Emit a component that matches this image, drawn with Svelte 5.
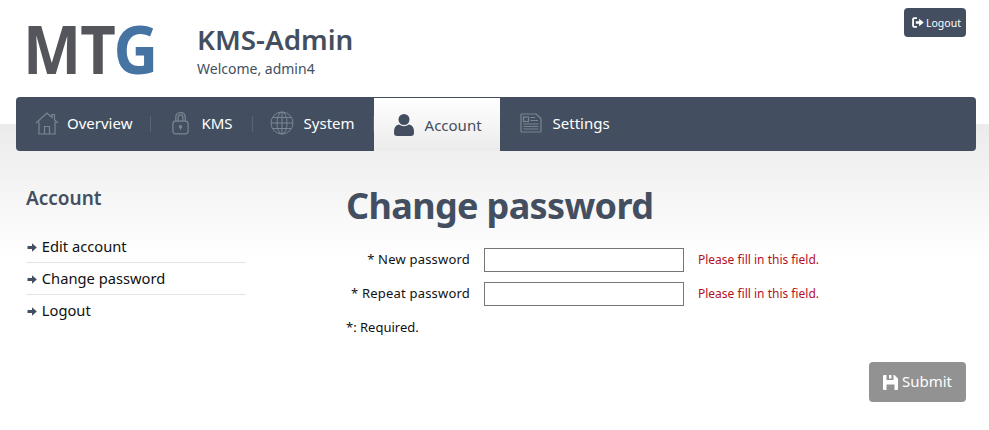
<script lang="ts">
const tabs = [
	{ id: "overview", label: "Overview" },
	{ id: "kms", label: "KMS" },
	{ id: "system", label: "System" },
	{ id: "account", label: "Account" },
	{ id: "settings", label: "Settings" }
];
const sideLinks = ["Edit account", "Change password", "Logout"];
const fields = ["New password", "Repeat password"];
</script>

<div class="page">
	<header class="top">
		<div class="logo"><span class="logo-text">MT<span class="logo-g">G</span></span></div>
		<div class="brand">
			<h1>KMS-Admin</h1>
			<p>Welcome, admin4</p>
		</div>
		<button class="logout">
			<svg width="12" height="11" viewBox="0 0 11 10"><path d="M4.5 1H2Q1 1 1 2V8Q1 9 2 9H4.5" fill="none" stroke="#fff" stroke-width="1.7"/><path d="M3.5 3.8H6.5V1.5L10.8 5L6.5 8.5V6.2H3.5Z" fill="#fff"/></svg>
			Logout
		</button>
	</header>

	<nav class="tabs">
		{#each tabs as tab, i}
			<div class="tab tab-{tab.id}" class:active={tab.id === "account"}>
				{#if tab.id === "overview"}
					<svg width="24" height="24" viewBox="0 0 24 24" fill="none" stroke="#7c8591" stroke-width="1.2"><path d="M1 12L12 2L17 6.5V3.5H19.5V9L23 12"/><path d="M4 10.5V23H20V10.5"/><path d="M9.5 23V15.5H14.5V23"/></svg>
				{:else if tab.id === "kms"}
					<svg width="19" height="24" viewBox="0 0 20 24" fill="none" stroke="#7c8591" stroke-width="1.3"><path d="M5 10V6.5Q5 1 10 1T15 6.5V10"/><path d="M7.5 10V6.5Q7.5 3.5 10 3.5T12.5 6.5V10"/><rect x="2" y="10" width="16" height="13.5" rx="3"/><circle cx="10" cy="16" r="1.2" fill="#7c8591"/><path d="M10 16V19"/></svg>
				{:else if tab.id === "system"}
					<svg width="24" height="24" viewBox="0 0 24 24" fill="none" stroke="#7c8591" stroke-width="1"><circle cx="12" cy="12" r="11"/><ellipse cx="12" cy="12" rx="5" ry="11"/><path d="M12 1V23M1 12H23M2.5 6.5H21.5M2.5 17.5H21.5"/></svg>
				{:else if tab.id === "account"}
					<svg width="20" height="22" viewBox="0 0 20 22" fill="#434f60"><circle cx="10" cy="5.5" r="5.5"/><path d="M0 18Q0 11 5 10.5Q10 14 15 10.5Q20 11 20 18V19Q20 22 17 22H3Q0 22 0 19Z"/></svg>
				{:else}
					<svg width="22" height="20" viewBox="0 0 22 20" fill="none" stroke="#7c8591" stroke-width="1.2"><path d="M1 2Q1 1 2 1H16L21 5.5V18Q21 19 20 19H2Q1 19 1 18Z"/><rect x="3.5" y="4" width="5" height="4.5"/><path d="M10.5 4.5H15M10.5 7.5H18M3.5 11H18.5M3.5 13.5H18.5M3.5 16H18.5"/></svg>
				{/if}
				<span>{tab.label}</span>
			</div>
			{#if i < 3}<i class="sep"></i>{/if}
		{/each}
	</nav>

	<div class="content">
		<aside class="side">
			<h2>Account</h2>
			<ul>
				{#each sideLinks as link}
					<li>
						<svg width="10" height="9" viewBox="0 0 10 9"><path d="M0.5 3H5V0.3L9.8 4.5L5 8.7V6H0.5Z" fill="#434f60"/></svg>
						{link}
					</li>
				{/each}
			</ul>
		</aside>

		<main class="main">
			<h1>Change password</h1>
			<form class="form" on:submit|preventDefault>
				{#each fields as field}
					<div class="row">
						<label for={field}>* {field}</label>
						<input id={field} type="password" />
						<span class="err">Please fill in this field.</span>
					</div>
				{/each}
				<p class="req">*: Required.</p>
				<div class="actions">
					<button class="submit" type="submit">
						<svg width="15" height="15" viewBox="0 0 15 15"><path fill-rule="evenodd" d="M0 1Q0 0 1 0H11.5L15 3.5V14Q15 15 14 15H1Q0 15 0 14ZM3.5 0V5H10.5V0H8.5V3.5H6V0ZM3.5 15V9.5H11.5V15Z" fill="#fff"/></svg>
						<span>Submit</span>
					</button>
				</div>
			</form>
		</main>
	</div>
</div>

<style>
	:global(body) {
		background: #fff;
	}
	.page {
		height: 430px;
		font-family: "Noto Sans", sans-serif;
		background: linear-gradient(#fff 124px, #ebebeb 124px, #fff 260px);
		color: #111;
		overflow: hidden;
	}
	.top {
		display: flex;
		height: 97px;
		box-sizing: border-box;
		padding: 0 23px 0 26px;
	}
	.logo {
		width: 171px;
		font-size: 67px;
		font-weight: 700;
		line-height: 97px;
		color: #54565c;
	}
	.logo-text {
		display: inline-block;
		margin-left: -3px;
		transform: scaleX(0.92);
		transform-origin: left center;
		letter-spacing: -1px;
	}
	.logo-g {
		color: #4674a2;
	}
	.brand {
		flex: 1;
		padding-top: 22px;
		color: #434f60;
	}
	.brand h1 {
		margin: 0;
		font-size: 27.8px;
		line-height: 34px;
		font-weight: 600;
	}
	.brand p {
		margin: 4px 0 0;
		font-size: 14px;
		line-height: 18px;
	}
	.logout {
		display: flex;
		align-items: center;
		gap: 2px;
		align-self: flex-start;
		margin-top: 8px;
		height: 29px;
		width: 62px;
		padding: 0 0 0 8px;
		border: 0;
		border-radius: 4px;
		background: #434f60;
		color: #fff;
		font-family: inherit;
		font-size: 10.5px;
	}
	.tabs {
		display: flex;
		align-items: center;
		height: 54px;
		margin: 0 13px 0 16px;
		background: #434f60;
		border-radius: 4px;
		color: #fff;
		font-size: 15px;
	}
	.tab {
		display: flex;
		align-items: center;
		height: 100%;
		gap: 8px;
		padding: 0 18px 3px 19px;
		box-sizing: border-box;
	}
	.tab-kms {
		gap: 11px;
		padding: 0 19px 3px 20px;
	}
	.tab-system {
		gap: 10px;
		padding-left: 17px;
	}
	.tab-settings {
		gap: 11px;
		padding-left: 20px;
	}
	.tab.active {
		height: 53px;
		align-self: flex-end;
		padding: 0 18px 0 20px;
		gap: 11px;
		background: linear-gradient(#fff, #ebebeb);
		color: #434f60;
	}
	.sep {
		width: 1px;
		height: 16px;
		background: #5a6574;
	}
	.content {
		display: flex;
		padding: 0 23px 0 26px;
	}
	.side {
		width: 220px;
		margin-right: 100px;
		padding-top: 34px;
	}
	.side h2 {
		margin: 0 0 20px;
		font-size: 19px;
		line-height: 26px;
		font-weight: 600;
		color: #434f60;
	}
	.side ul {
		margin: 0;
		padding: 0;
		list-style: none;
	}
	.side li {
		height: 31px;
		line-height: 31px;
		font-size: 14.7px;
		border-bottom: 1px solid #e3e3e3;
	}
	.side li:last-child {
		border-bottom: 0;
	}
	.side li svg {
		margin: 0 1px 0 1px;
	}
	.main {
		flex: 1;
	}
	.main h1 {
		margin: 0;
		padding-top: 32px;
		font-size: 36px;
		line-height: 46px;
		font-weight: 700;
		letter-spacing: -0.65px;
		color: #434f60;
	}
	.form {
		margin-top: 19px;
	}
	.row {
		display: flex;
		align-items: center;
		height: 24px;
		margin-bottom: 10px;
		font-size: 13px;
	}
	.row label {
		width: 124px;
		text-align: right;
		margin: 0 14px 2px 0;
		letter-spacing: 0.2px;
	}
	.row input {
		width: 200px;
		height: 24px;
		box-sizing: border-box;
		margin: 0 14px 0 0;
		border: 1px solid #767676;
		background: #fff;
	}
	.err {
		margin-bottom: 2px;
		color: #b3101f;
		font-size: 12px;
	}
	.req {
		margin: 12px 0 0;
		font-size: 13px;
		line-height: 18px;
	}
	.actions {
		display: flex;
		justify-content: flex-end;
		margin-top: 26px;
	}
	.submit {
		display: flex;
		align-items: center;
		justify-content: center;
		gap: 4px;
		width: 97px;
		height: 40px;
		border: 0;
		border-radius: 4px;
		background: #929292;
		color: #fff;
		font-family: inherit;
		font-size: 15px;
	}
	.submit span {
		margin-bottom: 2px;
	}
</style>
